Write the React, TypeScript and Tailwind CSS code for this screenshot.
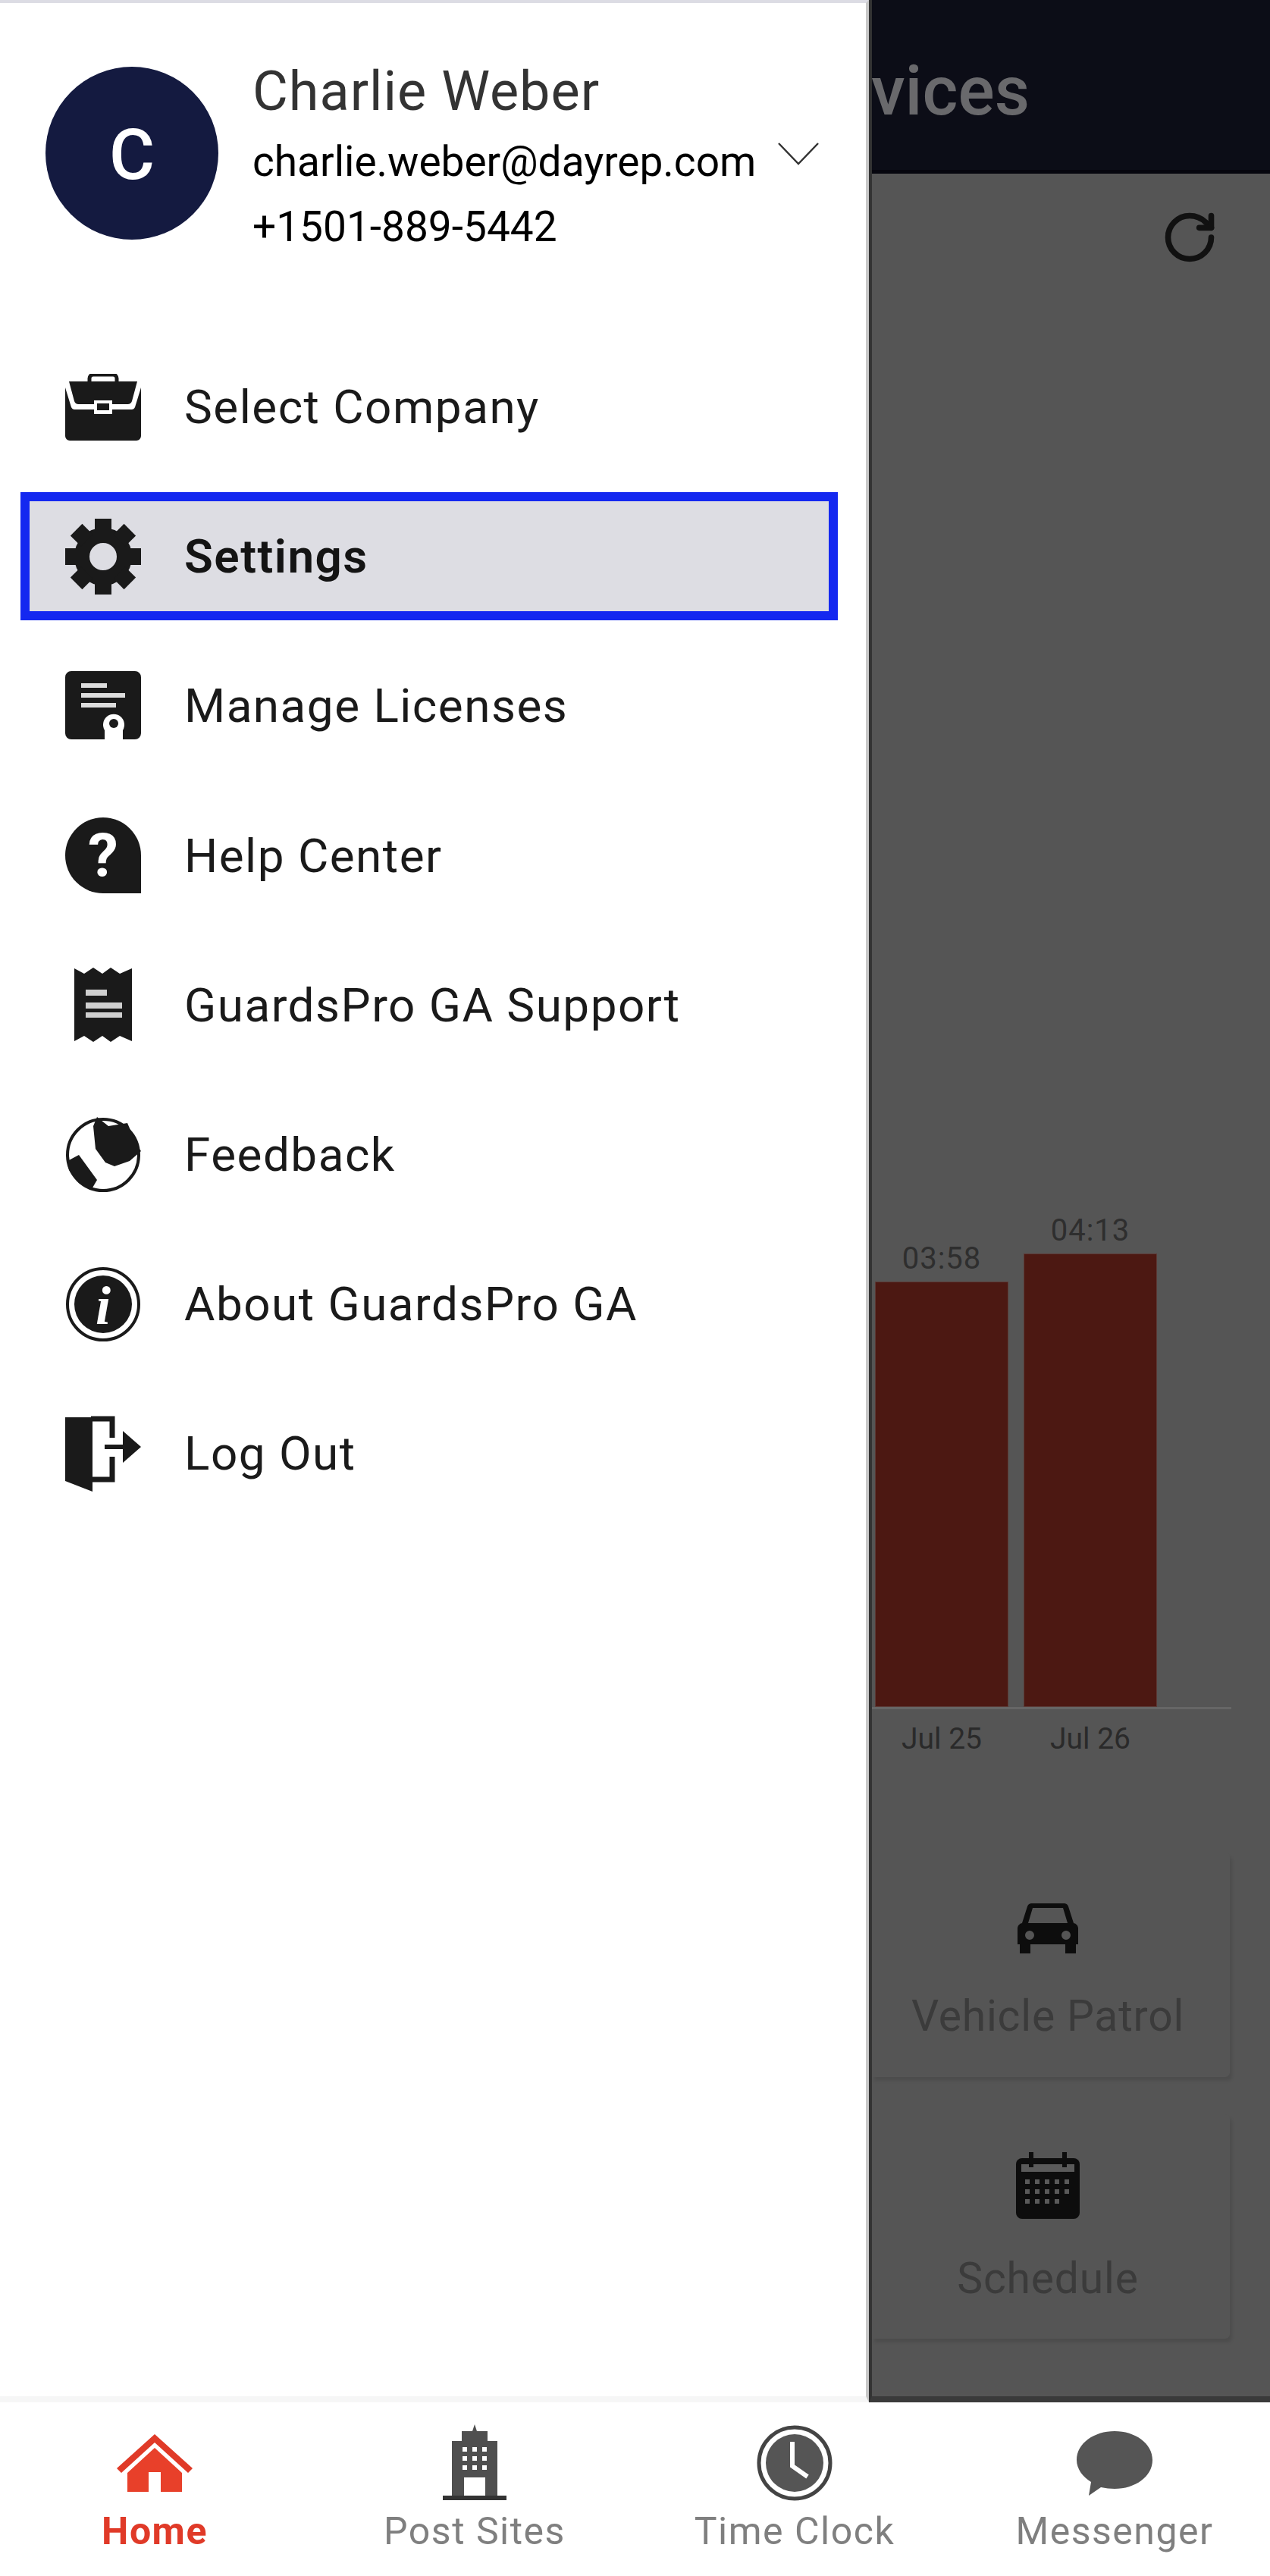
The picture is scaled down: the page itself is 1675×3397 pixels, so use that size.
import React from "react";
import { RotateCw } from "lucide-react";

const I = "#1a1a1a";

function Briefcase() {
  return (
    <svg viewBox="0 0 100 88" className="w-[100px] h-[88px]">
      <path d="M32 12V6a5 5 0 0 1 5-5h26a5 5 0 0 1 5 5v6" fill="none" stroke={I} strokeWidth="5" />
      <path d="M5 10h90l-7 26a6 6 0 0 1-6 4H62v-5H38v5H18a6 6 0 0 1-6-4z" fill={I} />
      <path d="M0 18v64a6 6 0 0 0 6 6h88a6 6 0 0 0 6-6V18l-8 26a5 5 0 0 1-5 3H62v6H38v-6H13a5 5 0 0 1-5-3z" fill={I} />
      <rect x="42" y="39" width="16" height="9" fill={I} />
    </svg>
  );
}

function Gear() {
  const teeth = [0, 45, 90, 135, 180, 225, 270, 315];
  return (
    <svg viewBox="0 0 100 100" className="w-[100px] h-[100px]">
      <circle cx="50" cy="50" r="28" fill="none" stroke={I} strokeWidth="20" />
      {teeth.map((a) => (
        <rect key={a} x="39" y="0" width="22" height="20" fill={I} transform={`rotate(${a} 50 50)`} />
      ))}
    </svg>
  );
}

function License() {
  return (
    <svg viewBox="0 0 100 92" className="w-[100px] h-[92px]">
      <path
        d="M8 0h84a8 8 0 0 1 8 8v74a8 8 0 0 1-8 8H76V78a14 14 0 1 0-24 0v12H8a8 8 0 0 1-8-8V8a8 8 0 0 1 8-8z"
        fill={I}
      />
      <rect x="21" y="16" width="34" height="6" fill="#ddd" />
      <rect x="21" y="29" width="58" height="6" fill="#ddd" />
      <rect x="21" y="42" width="46" height="6" fill="#ddd" />
      <circle cx="64" cy="69" r="6" fill={I} />
    </svg>
  );
}

function Help() {
  return (
    <svg viewBox="0 0 100 100" className="w-[100px] h-[100px]">
      <path d="M50 0a50 50 0 0 1 50 50v50H50A50 50 0 0 1 50 0z" fill={I} />
      <text x="50" y="78" textAnchor="middle" fontSize="80" fontWeight="700" fill="#fff" fontFamily="Roboto, sans-serif">?</text>
    </svg>
  );
}

function Receipt() {
  return (
    <svg viewBox="0 0 76 100" className="w-[76px] h-[100px]">
      <path
        d="M0 2l13 7L25 1l12 8L48 1l12 8L76 2v96l-16-7-12 8-11-8-12 8-12-8L0 98z"
        fill={I}
      />
      <rect x="15" y="30" width="28" height="8" fill="#cfcfcf" />
      <rect x="15" y="47" width="48" height="8" fill="#cfcfcf" />
      <rect x="15" y="60" width="48" height="7" fill="#cfcfcf" />
    </svg>
  );
}

function Feedback() {
  return (
    <svg viewBox="0 0 100 100" className="w-[100px] h-[100px]">
      <circle cx="50" cy="50" r="47" fill="none" stroke={I} strokeWidth="4" />
      <path d="M42 0l15 12 25-4 13 30 5 7-15 13-20 7-12-5-13-18-3-30z" fill={I} />
      <path d="M3 58l15-8 24 33-7 12-17-8L5 70z" fill={I} />
    </svg>
  );
}

function About() {
  return (
    <svg viewBox="0 0 100 100" className="w-[100px] h-[100px]">
      <circle cx="50" cy="50" r="47" fill="none" stroke={I} strokeWidth="4" />
      <circle cx="50" cy="50" r="38" fill={I} />
      <text x="50" y="76" textAnchor="middle" fontSize="72" fontStyle="italic" fontWeight="700" fill="#fff" fontFamily="'Liberation Serif', serif">i</text>
    </svg>
  );
}

function Logout() {
  return (
    <svg viewBox="0 0 100 100" className="w-[100px] h-[100px]">
      <path d="M0 2h36v98L0 86z" fill={I} />
      <path d="M34 4h28v25M62 54v30H34" fill="none" stroke={I} strokeWidth="7" />
      <path d="M52 38h24V20l24 21-24 21V44H52z" fill={I} />
    </svg>
  );
}

function Home() {
  return (
    <svg viewBox="0 0 100 76" className="w-[100px] h-[76px]">
      <path d="M50 0l50 45-6 6-44-40-44 40-6-6z" fill="#e03a28" />
      <path d="M50 18l36 33v25H58V50H42v26H14V51z" fill="#e8402a" />
    </svg>
  );
}

function Building() {
  const windows: React.ReactNode[] = [];
  for (let r = 0; r < 3; r++)
    for (let c = 0; c < 3; c++)
      windows.push(<rect key={`${r}${c}`} x={26 + c * 13} y={30 + r * 12} width="6" height="6" fill="#fff" />);
  return (
    <svg viewBox="0 0 84 102" className="w-[84px] h-[102px]">
      <path d="M42 0l3 9h14v13h13v72H12V22h13V9h14z" fill="#4f4f4f" />
      {windows}
      <rect x="28" y="70" width="28" height="24" fill="#fff" />
      <rect x="0" y="94" width="84" height="6" fill="#333" />
    </svg>
  );
}

function Clock() {
  return (
    <svg viewBox="0 0 100 100" className="w-[100px] h-[100px]">
      <circle cx="50" cy="50" r="47" fill="none" stroke="#444" strokeWidth="5" />
      <circle cx="50" cy="50" r="38" fill="#555" />
      <path d="M47 22v32l20 14" fill="none" stroke="#fff" strokeWidth="6" />
    </svg>
  );
}

function Bubble() {
  return (
    <svg viewBox="0 0 100 88" className="w-[100px] h-[88px]">
      <path d="M50 2c27 0 50 16 50 38S77 78 50 78c-6 0-12-1-18-2L16 87l3-18C8 62 0 52 0 40 0 18 23 2 50 2z" fill="#555" />
    </svg>
  );
}

function Car() {
  return (
    <svg viewBox="0 0 80 66" className="w-[80px] h-[66px]">
      <path
        fillRule="evenodd"
        d="M18 0h44a6 6 0 0 1 5 4l7 22a8 8 0 0 1 6 8v20h-3v12H63V54H17v12H3V54H0V34a8 8 0 0 1 6-8l7-22a6 6 0 0 1 5-4zm2 6l-6 20h52L60 6zM16 36a6 6 0 1 0 0 12 6 6 0 0 0 0-12zm48 0a6 6 0 1 0 0 12 6 6 0 0 0 0-12z"
        fill="#0d0d0d"
      />
    </svg>
  );
}

function Calendar() {
  const dots: React.ReactNode[] = [];
  for (let r = 0; r < 3; r++)
    for (let c = 0; c < 5; c++)
      if (!(r === 2 && c === 4))
        dots.push(<rect key={`${r}${c}`} x={12 + c * 13} y={36 + r * 13} width="6" height="6" fill="#5a5a5a" />);
  return (
    <svg viewBox="0 0 84 88" className="w-[84px] h-[88px]">
      <path d="M8 8h68a8 8 0 0 1 8 8v64a8 8 0 0 1-8 8H8a8 8 0 0 1-8-8V16a8 8 0 0 1 8-8z" fill="#0d0d0d" />
      <rect x="7" y="16" width="70" height="10" fill="#5a5a5a" />
      <rect x="17" y="0" width="6" height="20" fill="#0d0d0d" />
      <rect x="61" y="0" width="6" height="20" fill="#0d0d0d" />
      {dots}
    </svg>
  );
}

const rows = [
  { label: "Select Company", icon: <Briefcase /> },
  { label: "Settings", icon: <Gear />, active: true },
  { label: "Manage Licenses", icon: <License /> },
  { label: "Help Center", icon: <Help /> },
  { label: "GuardsPro GA Support", icon: <Receipt /> },
  { label: "Feedback", icon: <Feedback /> },
  { label: "About GuardsPro GA", icon: <About /> },
  { label: "Log Out", icon: <Logout /> },
];

const nav = [
  { label: "Home", icon: <Home />, active: true },
  { label: "Post Sites", icon: <Building /> },
  { label: "Time Clock", icon: <Clock /> },
  { label: "Messenger", icon: <Bubble /> },
];

function Bar({ value, date, height }: { value: string; date: string; height: number }) {
  return (
    <div className="relative w-[176px] flex flex-col justify-end items-center">
      <span className="text-[40px] leading-[44px] mb-[8px] tracking-[1px] text-[#2e2e2e]">{value}</span>
      <div className="w-full bg-[#4c1812] border border-[#5c3a36]" style={{ height }} />
      <span className="absolute top-full mt-[20px] text-[39px] leading-[44px] text-[#2a2a2a] whitespace-nowrap">{date}</span>
    </div>
  );
}

function Card({ label, icon, className }: { label: string; icon: React.ReactNode; className: string }) {
  return (
    <div className={`w-[472px] h-[296px] pr-[8px] flex flex-col items-center bg-[#555555] rounded-r-[6px] shadow-[3px_5px_4px_rgba(0,0,0,0.1)] ${className}`}>
      {icon}
      <span className="text-[#3b3b3b] text-[57px] leading-[68px] whitespace-nowrap tracking-[0.8px]">{label}</span>
    </div>
  );
}

export default function App() {
  return (
    <div className="w-[1675px] h-[3397px] flex flex-col overflow-hidden bg-white font-['Roboto',sans-serif]">
      <div className="flex h-[3168px]">
        {/* Drawer */}
        <aside className="w-[1146px] shrink-0 bg-white border-t-[4px] border-t-[#dcdce4] border-b-[8px] border-b-[#f6f6f6] border-r-[4px] border-r-[#c8c8c8] flex flex-col">
          <div className="relative flex h-[434px] pt-[84px] pl-[60px]">
            <div className="w-[228px] h-[228px] rounded-full bg-[#141a40] text-white flex items-center justify-center pt-[6px] text-[92px] font-medium">
              C
            </div>
            <div className="ml-[45px] -mt-[15px] flex flex-col">
              <span className="text-[72px] leading-[96px] text-[#333333] tracking-[1px]">Charlie Weber</span>
              <span className="text-[55px] leading-[88px] text-black">charlie.weber@dayrep.com</span>
              <span className="text-[55px] leading-[84px] text-black">+1501-889-5442</span>
            </div>
            <svg viewBox="0 0 54 30" className="absolute left-[1026px] top-[184px] w-[54px] h-[30px]">
              <path d="M1 1l26 27L53 1" fill="none" stroke="#333" strokeWidth="2.5" />
            </svg>
          </div>
          <nav className="flex flex-col">
            {rows.map((r) => (
              <div key={r.label} className="h-[197.2px] flex items-center">
                <div
                  className={
                    r.active
                      ? "ml-[27px] w-[1078px] h-[169px] flex items-center pl-[47px] bg-[#dddde3] border-[12px] border-[#1428f0]"
                      : "ml-[27px] w-[1078px] h-[169px] flex items-center pl-[59px]"
                  }
                >
                  <div className="w-[100px] flex justify-center items-center">{r.icon}</div>
                  <span className={`ml-[57px] text-[62px] tracking-[1.5px] ${r.active ? "font-semibold text-[#141414]" : "text-[#1a1a1a]"}`}>
                    {r.label}
                  </span>
                </div>
              </div>
            ))}
          </nav>
        </aside>

        {/* Dimmed page behind the drawer */}
        <main className="flex-1 min-w-0 flex flex-col bg-[#555555] border-l-[4px] border-l-[#333333] border-b-[8px] border-b-[#3a3a3a] overflow-hidden">
          <header className="h-[229px] shrink-0 flex items-center justify-end pt-[16px] pr-[317px] bg-[#0c0d17] border-b-[5px] border-b-[#06060e]">
            <span className="text-[90px] font-medium text-[#69696c] whitespace-nowrap">vices</span>
          </header>
          <div className="h-[170px] shrink-0 flex justify-end pt-[46px] pr-[68px]">
            <RotateCw className="w-[76px] h-[76px] text-[#111111]" strokeWidth={2.4} />
          </div>
          <div className="h-[1852px] shrink-0 pl-[4px] w-[474px] flex gap-[20px] items-end relative">
            <Bar value="03:58" date="Jul 25" height={561} />
            <Bar value="04:13" date="Jul 26" height={598} />
            <div className="absolute left-0 top-full w-[474px] h-[3px] bg-[#666666]" />
          </div>
          <Card label="Vehicle Patrol" className="mt-[192px] pt-[67px]" icon={<div className="mb-[49px]"><Car /></div>} />
          <Card label="Schedule" className="mt-[49px] pt-[50px]" icon={<div className="mb-[45px]"><Calendar /></div>} />
        </main>
      </div>

      {/* Bottom tabs */}
      <div className="flex-1 -mx-[7px] grid grid-cols-[repeat(4,422px)] pt-[20px]">
        {nav.map((n) => (
          <div key={n.label} className="relative flex flex-col items-center">
            <div className="h-[120px] flex items-center justify-center">{n.icon}</div>
            <span className={`mt-[2px] text-[50px] leading-[56px] tracking-[1.5px] ${n.active ? "font-bold text-[#e03a28]" : "text-[#7f7f7f]"}`}>
              {n.label}
            </span>
          </div>
        ))}
      </div>
    </div>
  );
}
